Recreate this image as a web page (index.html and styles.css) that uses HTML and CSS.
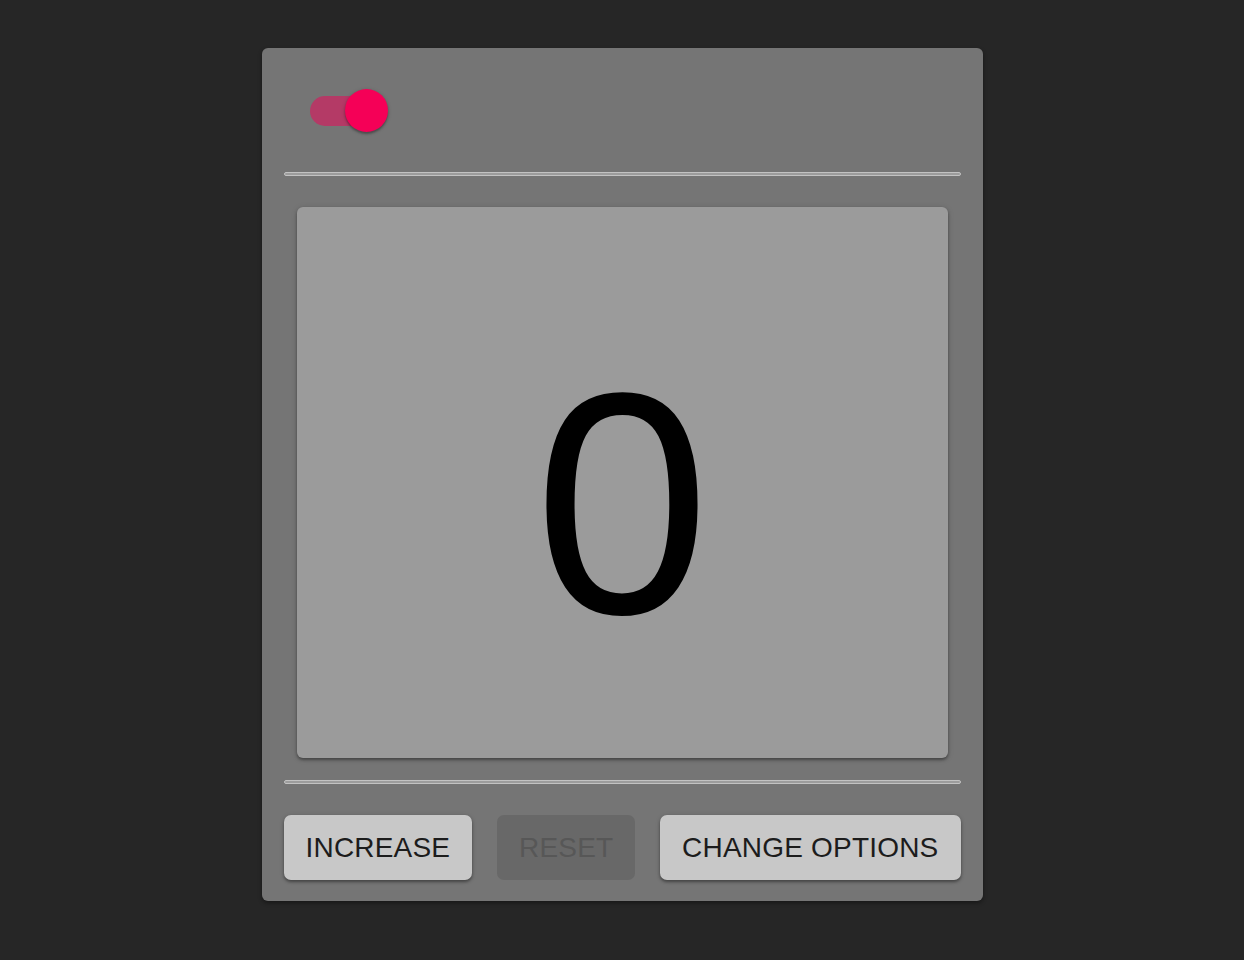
FILE: index.html
```html
<!DOCTYPE html>
<html lang="en">
<head>
<meta charset="utf-8">
<title>Counter</title>
<link rel="stylesheet" href="styles.css">
</head>
<body>
<div class="card">
  <div class="header">
    <span class="switch">
      <span class="track"></span>
      <span class="thumb"></span>
    </span>
  </div>
  <div class="divider"></div>
  <div class="panel">
    <span class="count">0</span>
  </div>
  <div class="divider divider-bottom"></div>
  <div class="actions">
    <button class="btn">INCREASE</button>
    <button class="btn btn-disabled" disabled>RESET</button>
    <button class="btn">CHANGE OPTIONS</button>
  </div>
</div>
</body>
</html>
```

FILE: styles.css
```css
html, body {
  margin: 0;
  padding: 0;
  background: #262626;
  font-family: "Liberation Sans", Arial, sans-serif;
}

body {
  padding-top: 48px;
  height: 912px;
}

.card {
  width: 721px;
  margin: 0 auto;
  box-sizing: border-box;
  background: #757575;
  border-radius: 6px;
  padding: 22px 22px 21px;
  box-shadow: 0 2px 4px rgba(0, 0, 0, 0.4);
}

.header {
  height: 81px;
  display: flex;
  align-items: center;
}

.switch {
  position: relative;
  width: 124px;
  height: 81px;
  display: block;
}

.track {
  position: absolute;
  left: 26px;
  top: 26px;
  width: 72px;
  height: 30px;
  border-radius: 15px;
  background: #b43a66;
}

.thumb {
  position: absolute;
  left: 61px;
  top: 19px;
  width: 43px;
  height: 43px;
  border-radius: 50%;
  background: #f50057;
  box-shadow: 0 2px 2px rgba(0, 0, 0, 0.25), 0 1px 4px rgba(0, 0, 0, 0.2);
}

.divider {
  margin-top: 21px;
  height: 2px;
  border: 1px solid #c2c2c2;
  border-radius: 2px;
  background: #9c9c9c;
}

.divider-bottom {
  margin-top: 22px;
}

.panel {
  margin: 31px 13px 0;
  height: 551px;
  background: #9b9b9b;
  border-radius: 6px;
  box-shadow: 0 2px 3px rgba(0, 0, 0, 0.35), 0 1px 6px rgba(0, 0, 0, 0.15);
  display: flex;
  align-items: center;
  justify-content: center;
}

.count {
  font-size: 316px;
  line-height: 1;
  color: #000;
  padding-top: 42px;
  letter-spacing: 0;
}

.actions {
  margin-top: 31px;
  display: flex;
  justify-content: space-between;
}

.btn {
  height: 65px;
  padding: 0 22px;
  border: none;
  border-radius: 7px;
  background: #c8c8c8;
  color: #1c1c1c;
  font-family: "Liberation Sans", Arial, sans-serif;
  font-size: 28px;
  letter-spacing: 0.2px;
  box-shadow: 0 2px 3px rgba(0, 0, 0, 0.35), 0 1px 5px rgba(0, 0, 0, 0.15);
}

.btn-disabled {
  background: #686868;
  color: #575757;
  box-shadow: none;
}
```
